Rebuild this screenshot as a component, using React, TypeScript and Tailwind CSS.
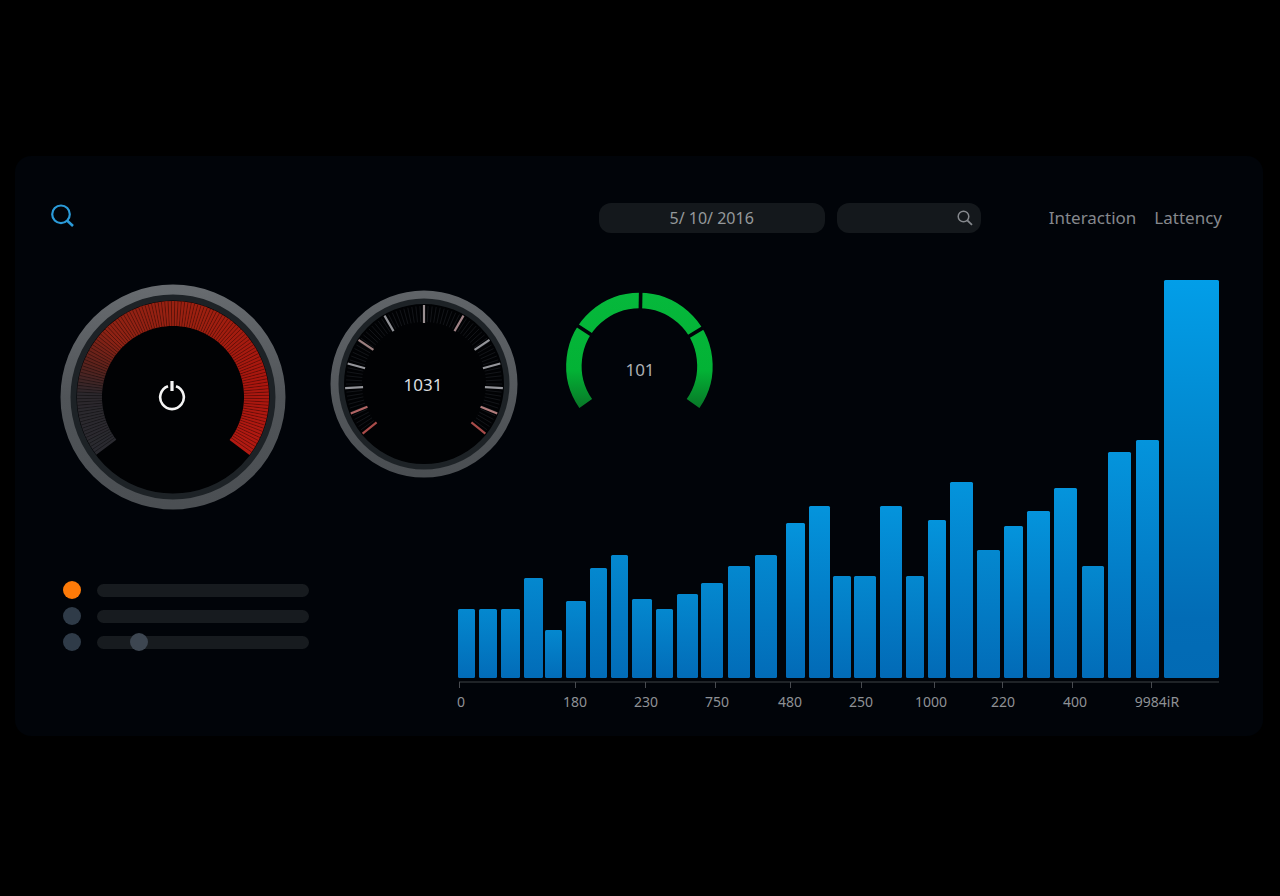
import React, { useState } from 'react'

const FONT = "font-['Noto_Sans','Open_Sans',sans-serif]"

// Point on a circle, angle in degrees clockwise from 3 o'clock
const polar = (c: number, r: number, deg: number) => {
  const a = (deg * Math.PI) / 180
  return { x: c + r * Math.cos(a), y: c + r * Math.sin(a) }
}

const arcPath = (c: number, r: number, from: number, to: number) => {
  const p = polar(c, r, from)
  const q = polar(c, r, to)
  return `M ${p.x} ${p.y} A ${r} ${r} 0 ${to - from > 180 ? 1 : 0} 1 ${q.x} ${q.y}`
}

const range = (from: number, to: number, step: number) => {
  const out: number[] = []
  for (let v = from; v <= to; v += step) out.push(v)
  return out
}

// Colour stops along the power dial
const HEAT: [number, number[]][] = [
  [143, [42, 42, 48]],
  [182, [44, 40, 45]],
  [202, [92, 34, 28]],
  [225, [142, 34, 20]],
  [290, [158, 32, 16]],
  [350, [170, 22, 14]],
  [398, [178, 26, 18]],
]

const heat = (deg: number) => {
  const i = Math.max(1, HEAT.findIndex(([stop]) => stop >= deg))
  const [a, from] = HEAT[i - 1]
  const [b, to] = HEAT[i]
  const t = (deg - a) / (b - a)
  return `rgb(${from.map((v, k) => Math.round(v + (to[k] - v) * t)).join(',')})`
}

const Ray: React.FC<{ c: number; deg: number; from: number; to: number; color: string; width: number }> = ({
  c,
  deg,
  from,
  to,
  color,
  width,
}) => {
  const p = polar(c, from, deg)
  const q = polar(c, to, deg)
  return <line x1={p.x} y1={p.y} x2={q.x} y2={q.y} stroke={color} strokeWidth={width} />
}

const PowerDial: React.FC = () => (
  <div className="grid shrink-0 place-items-center">
    <svg width="226" height="226" viewBox="0 0 226 226" className="[grid-area:1/1]" aria-hidden="true">
      <defs>
        <linearGradient id="rimA" x1="0" y1="0" x2="0" y2="1">
          <stop offset="0" stopColor="#676b6f" />
          <stop offset="0.5" stopColor="#505458" />
          <stop offset="1" stopColor="#4b4f53" />
        </linearGradient>
      </defs>
      <circle cx="113" cy="113" r="100" fill="#010204" stroke="#1d2226" strokeWidth="7" />
      <circle cx="113" cy="113" r="107.5" fill="none" stroke="url(#rimA)" strokeWidth="10" />
      {range(143, 395, 2).map((deg) => (
        <path key={deg} d={arcPath(113, 83.5, deg, deg + 2.2)} fill="none" stroke={heat(deg + 1)} strokeWidth="25" />
      ))}
      {range(145, 395, 2).map((deg) => (
        <Ray key={deg} c={113} deg={deg} from={71} to={96} color="rgba(0,0,0,0.32)" width={1} />
      ))}
    </svg>
    <button type="button" aria-label="Power" className="cursor-pointer [grid-area:1/1]">
      <svg width="30" height="34" viewBox="0 0 30 34" fill="none" aria-hidden="true">
        <path d="M18 6.2 A11.8 11.8 0 1 1 10 6.2" stroke="#f5f5f5" strokeWidth="2.6" />
        <path d="M14 1 V11" stroke="#f5f5f5" strokeWidth="3.2" />
      </svg>
    </button>
  </div>
)

const MAJOR_TICKS = [
  { deg: 141, color: '#a94c4a' },
  { deg: 158, color: '#b06565' },
  { deg: 177, color: '#94959a' },
  { deg: 195, color: '#94959a' },
  { deg: 214, color: '#9c8080' },
  { deg: 240, color: '#8f9095' },
  { deg: 270, color: '#9a9092' },
  { deg: 300, color: '#a08387' },
  { deg: 326, color: '#94959a' },
  { deg: 345, color: '#94959a' },
  { deg: 363, color: '#94959a' },
  { deg: 382, color: '#b07c7c' },
  { deg: 399, color: '#a94c4a' },
]

const TickDial: React.FC = () => (
  <svg width="188" height="188" viewBox="0 0 188 188" className="mt-1.5 shrink-0">
    <defs>
      <linearGradient id="rimB" x1="0" y1="0" x2="0" y2="1">
        <stop offset="0" stopColor="#606468" />
        <stop offset="1" stopColor="#4a4e52" />
      </linearGradient>
    </defs>
    <circle cx="94" cy="94" r="83" fill="#010204" stroke="#1d2226" strokeWidth="6" />
    <circle cx="94" cy="94" r="89.5" fill="none" stroke="url(#rimB)" strokeWidth="8" />
    {range(141, 399, 3).map((deg) => (
      <Ray key={deg} c={94} deg={deg} from={62} to={78} color="#131519" width={1} />
    ))}
    {MAJOR_TICKS.map(({ deg, color }) => (
      <Ray key={deg} c={94} deg={deg} from={61} to={79} color={color} width={2.2} />
    ))}
    <text x="93" y="101" textAnchor="middle" fontSize="17" fill="#dcdee0">
      1031
    </text>
  </svg>
)

const GreenGauge: React.FC = () => (
  <svg width="156" height="120" viewBox="0 0 156 120" className="mt-2 shrink-0">
    <defs>
      <linearGradient id="green" gradientUnits="userSpaceOnUse" x1="0" y1="0" x2="0" y2="118">
        <stop offset="0" stopColor="#06b93c" />
        <stop offset="0.7" stopColor="#03b235" />
        <stop offset="1" stopColor="#087a28" />
      </linearGradient>
    </defs>
    <g transform="translate(-0.6 -4)">
      <path d={arcPath(78, 65.5, 145, 395)} fill="none" stroke="url(#green)" strokeWidth="15.5" />
      {[213, 271, 329].map((deg) => (
        <Ray key={deg} c={78} deg={deg} from={55} to={76} color="#010409" width={3.6} />
      ))}
    </g>
    <text x="78" y="84" textAnchor="middle" fontSize="17" fill="#adb0b3">
      101
    </text>
  </svg>
)

// x, width, height
const BARS = [
  [4, 17, 69],
  [25, 18, 69],
  [47, 19, 69],
  [70, 19, 100],
  [91, 17, 48],
  [112, 20, 77],
  [136, 17, 110],
  [157, 17, 123],
  [178, 20, 79],
  [202, 17, 69],
  [223, 21, 84],
  [247, 22, 95],
  [274, 22, 112],
  [301, 22, 123],
  [332, 19, 155],
  [355, 21, 172],
  [379, 18, 102],
  [400, 22, 102],
  [426, 22, 172],
  [452, 18, 102],
  [474, 18, 158],
  [496, 23, 196],
  [523, 23, 128],
  [550, 19, 152],
  [573, 23, 167],
  [600, 23, 190],
  [628, 22, 112],
  [654, 23, 226],
  [682, 23, 238],
  [710, 55, 398],
]

const AXIS = [
  { tick: 5, x: 7, label: '0' },
  { tick: 121, x: 121, label: '180' },
  { tick: 191, x: 192, label: '230' },
  { tick: 261, x: 263, label: '750' },
  { tick: 336, x: 336, label: '480' },
  { tick: 407, x: 407, label: '250' },
  { tick: 480, x: 477, label: '1000' },
  { tick: 548, x: 549, label: '220' },
  { tick: 618, x: 621, label: '400' },
  { tick: 697, x: 703, label: '9984iR' },
]

const barFill = (height: number) => {
  if (height > 300) return 'url(#barPeak)'
  return height > 140 ? 'url(#barTall)' : 'url(#barShort)'
}

const BarChart: React.FC = () => (
  <svg viewBox="0 0 768 432" className="w-full" role="img" aria-label="Latency chart">
    <defs>
      <linearGradient id="barPeak" x1="0" y1="0" x2="0" y2="1">
        <stop offset="0" stopColor="#029ee8" />
        <stop offset="0.5" stopColor="#0282c8" />
        <stop offset="0.85" stopColor="#026cb6" />
        <stop offset="1" stopColor="#026ab4" />
      </linearGradient>
      <linearGradient id="barTall" x1="0" y1="0" x2="0" y2="1">
        <stop offset="0" stopColor="#0494dc" />
        <stop offset="1" stopColor="#026ab6" />
      </linearGradient>
      <linearGradient id="barShort" x1="0" y1="0" x2="0" y2="1">
        <stop offset="0" stopColor="#0488cf" />
        <stop offset="1" stopColor="#026cb8" />
      </linearGradient>
    </defs>
    {BARS.map(([x, width, height]) => (
      <rect key={x} x={x} y={398 - height} width={width} height={height} rx="1.5" fill={barFill(height)} />
    ))}
    <path d="M5 402 H765" stroke="#3f4247" strokeWidth="1.2" />
    {AXIS.map(({ tick, x, label }) => (
      <g key={label}>
        <path d={`M${tick + 0.5} 402 V408`} stroke="#484b50" strokeWidth="1" />
        <text x={x} y="427" textAnchor="middle" fontSize="14" fill="#8e9195">
          {label}
        </text>
      </g>
    ))}
  </svg>
)

const CHANNELS = [
  { id: 'primary', value: 0, thumb: '[&::-webkit-slider-thumb]:bg-transparent' },
  { id: 'secondary', value: 0, thumb: '[&::-webkit-slider-thumb]:bg-transparent' },
  { id: 'tertiary', value: 17, thumb: '[&::-webkit-slider-thumb]:bg-[#3d4651]' },
]

const Channels: React.FC = () => {
  const [active, setActive] = useState('primary')

  return (
    <div className="mt-[71px] flex flex-col gap-2 pl-3">
      {CHANNELS.map(({ id, value, thumb }) => (
        <div key={id} className="flex h-[18px] items-center gap-4">
          <input
            type="radio"
            name="channel"
            aria-label={`Select ${id} channel`}
            checked={active === id}
            onChange={() => setActive(id)}
            className="size-[18px] shrink-0 cursor-pointer appearance-none rounded-full bg-[#2f3b48] checked:bg-[#fd7a08]"
          />
          <input
            type="range"
            aria-label={`Level of ${id} channel`}
            defaultValue={value}
            className={`h-[13px] w-[212px] cursor-pointer appearance-none rounded-full bg-[#171b1f] [&::-webkit-slider-thumb]:size-[18px] [&::-webkit-slider-thumb]:appearance-none [&::-webkit-slider-thumb]:rounded-full ${thumb}`}
          />
        </div>
      ))}
    </div>
  )
}

const Header: React.FC = () => (
  <header className="flex h-[30px] items-center">
    <button type="button" aria-label="Search" className="cursor-pointer">
      <svg width="24" height="28" viewBox="0 0 24 28" fill="none" stroke="#2b9bd9" aria-hidden="true">
        <circle cx="10" cy="10.3" r="8.8" strokeWidth="2.2" />
        <path d="M16 16.5 L22 22" strokeWidth="2.6" />
      </svg>
    </button>

    <div className="ml-auto flex items-center gap-3">
      <input
        type="text"
        aria-label="Date"
        defaultValue="5/ 10/ 2016"
        className="h-[30px] w-[226px] rounded-xl bg-[#14181c] text-center text-base text-[#95989b] outline-none"
      />
      <label className="flex h-[30px] w-36 items-center rounded-xl bg-[#14181c] pr-2">
        <input type="search" aria-label="Filter" className="min-w-0 flex-1 bg-transparent px-3 text-sm text-[#95989b] outline-none" />
        <svg width="16" height="16" viewBox="0 0 16 16" fill="none" stroke="#85888d" aria-hidden="true">
          <circle cx="6.5" cy="6.5" r="5.3" strokeWidth="1.5" />
          <path d="M10.3 10.3 L15 14.8" strokeWidth="1.8" />
        </svg>
      </label>
    </div>

    <nav className="ml-[68px] flex gap-[18px] text-[17px] text-[#85888d]">
      <a href="#interaction">Interaction</a>
      <a href="#latency">Lattency</a>
    </nav>
  </header>
)

const App: React.FC = () => (
  <div className={`flex min-h-screen items-center bg-black pr-[17px] pb-1 pl-[15px] ${FONT}`}>
    <main className="w-full rounded-2xl bg-[#010409] pt-[47px] pr-[41px] pb-6 pl-9">
      <Header />
      {/* The dials share the first row with the low part of the chart */}
      <div className="mt-[47px] grid grid-cols-[403px_1fr] grid-rows-[auto_1fr]">
        <div className="col-start-2 row-span-2 row-start-1">
          <BarChart />
        </div>
        <div className="col-span-2 col-start-1 row-start-1 flex items-start gap-11 pt-1 pl-[9px]">
          <PowerDial />
          <TickDial />
          <GreenGauge />
        </div>
        <div className="col-start-1 row-start-2">
          <Channels />
        </div>
      </div>
    </main>
  </div>
)

export default App
